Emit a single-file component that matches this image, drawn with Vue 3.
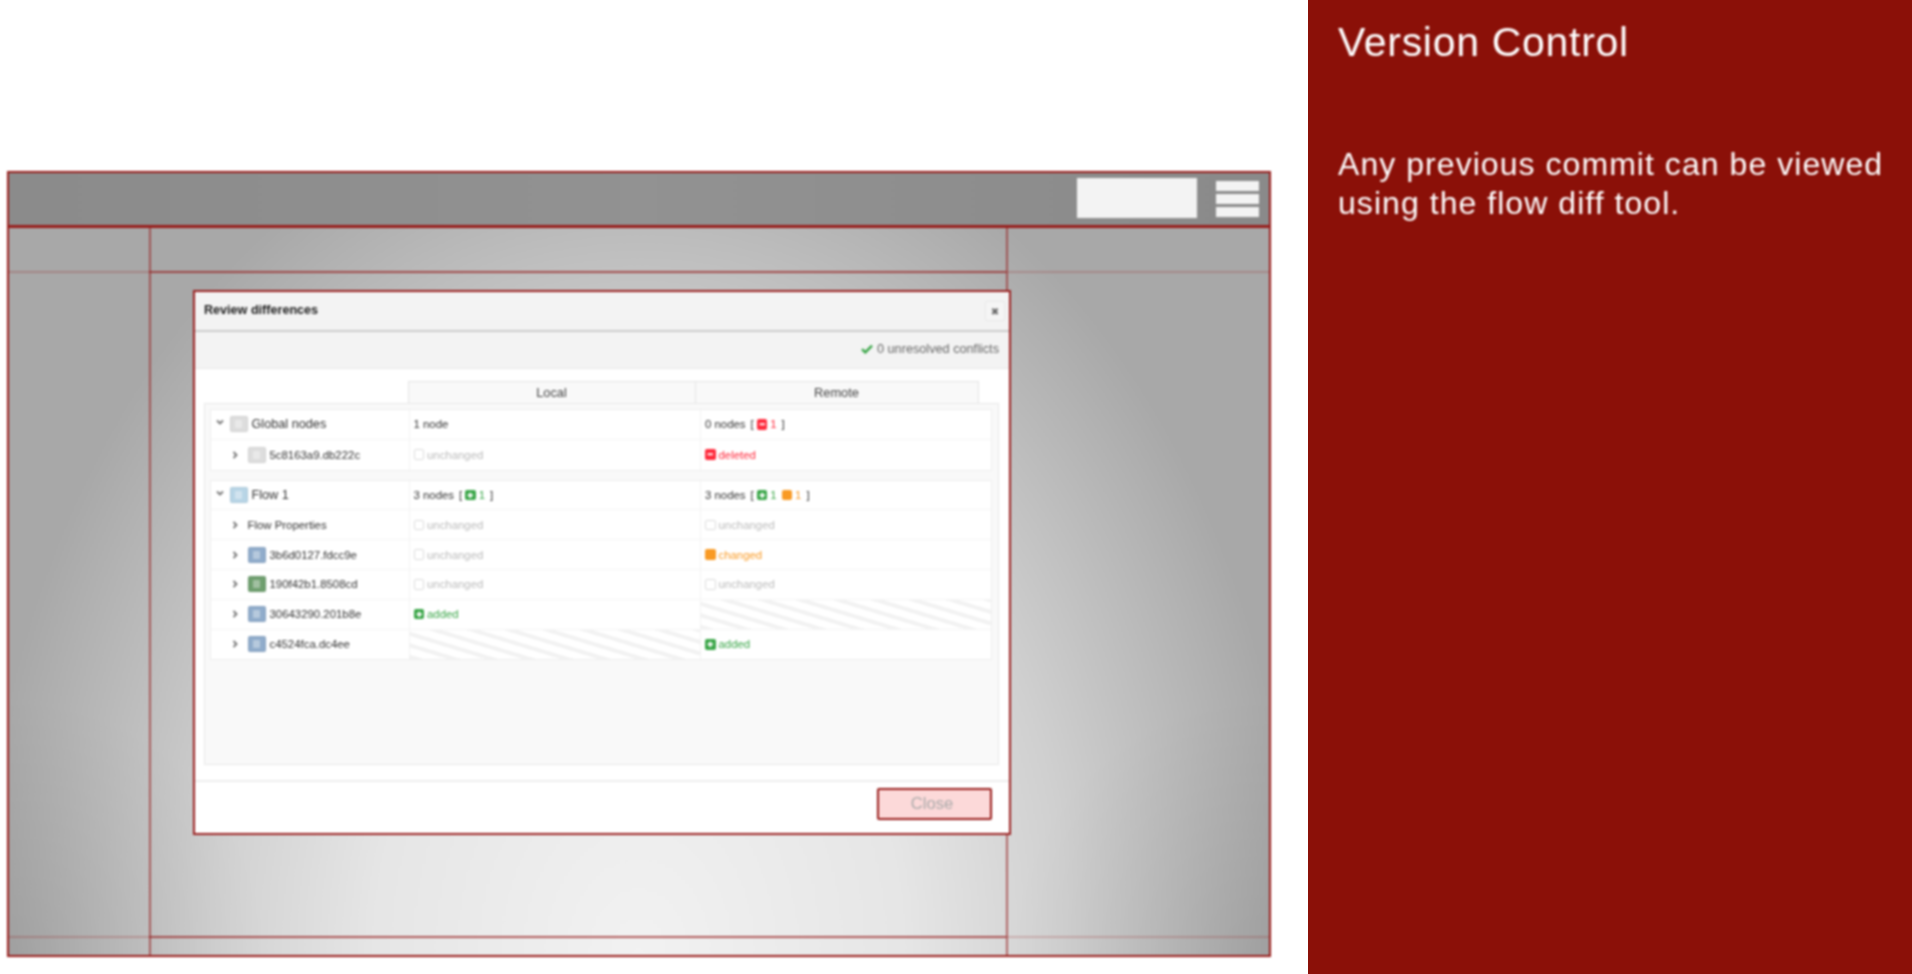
<template>
  <div class="page">
    <div class="stage">
      <div class="frame">
        <header class="topbar">
          <div class="search"></div>
          <div class="burger"><i></i><i></i><i></i></div>
        </header>
        <main class="workspace">
          <span class="guide v left"></span>
          <span class="guide v right"></span>
          <span class="guide h top"></span>
          <span class="guide h bottom"></span>

          <section class="dialog">
            <div class="dialog-title">
              <span>Review differences</span>
              <button class="close-x">✖</button>
            </div>
            <div class="dialog-toolbar">
              <svg class="tick" viewBox="0 0 12 10"><path d="M1 5.2 4.3 8.4 11 1.6" /></svg>
              <span>0 unresolved conflicts</span>
            </div>
            <div class="dialog-body">
              <div class="col-heads">
                <div class="col-head">Local</div>
                <div class="col-head">Remote</div>
              </div>
              <div class="list">
                <div v-for="group in groups" :key="group.name" class="group">
                  <div class="row">
                    <div class="name parent">
                      <svg class="chev" viewBox="0 0 8 8"><path d="M1 2.5 4 5.5 7 2.5" /></svg>
                      <span class="node" :class="group.icon"><b></b></span>
                      <span class="group-label">{{ group.name }}</span>
                    </div>
                    <div v-for="side in ['local', 'remote']" :key="side" class="cell">
                      <span>{{ group[side].text }}</span>
                      <span v-if="group[side].marks" class="bracket">[</span>
                      <span v-for="m in group[side].marks" :key="m" class="count" :class="m">
                        <span class="mark" :class="m">
                          <svg viewBox="0 0 12 12"><path v-if="m === 'added'" d="M6 3v6M3 6h6" /><path v-if="m === 'deleted'" d="M3 6h6" /></svg>
                        </span>1
                      </span>
                      <span v-if="group[side].marks">]</span>
                    </div>
                  </div>
                  <div v-for="row in group.rows" :key="row.name" class="row">
                    <div class="name child">
                      <svg class="chev" viewBox="0 0 8 8"><path d="M2.5 1 5.5 4 2.5 7" /></svg>
                      <span v-if="row.icon" class="node" :class="row.icon"><b></b></span>
                      <span class="child-label">{{ row.name }}</span>
                    </div>
                    <div v-for="side in ['local', 'remote']" :key="side" class="cell" :class="{ stripes: row[side] === 'none' }">
                      <span v-if="row[side] !== 'none'" class="status" :class="row[side]">
                        <span class="mark" :class="row[side]">
                          <svg viewBox="0 0 12 12"><path v-if="row[side] === 'added'" d="M6 3v6M3 6h6" /><path v-if="row[side] === 'deleted'" d="M3 6h6" /></svg>
                        </span>
                        {{ row[side] }}
                      </span>
                    </div>
                  </div>
                </div>
              </div>
            </div>
            <div class="dialog-footer">
              <button class="close-btn">Close</button>
            </div>
          </section>
        </main>
      </div>
    </div>

    <aside class="notes">
      <h1>Version Control</h1>
      <p>Any previous commit can be viewed using the flow diff tool.</p>
    </aside>
  </div>
</template>

<script setup>
const groups = [
  {
    name: 'Global nodes',
    icon: 'grey',
    local: { text: '1 node' },
    remote: { text: '0 nodes', marks: ['deleted'] },
    rows: [
      { name: '5c8163a9.db222c', icon: 'grey', local: 'unchanged', remote: 'deleted' }
    ]
  },
  {
    name: 'Flow 1',
    icon: 'sky',
    local: { text: '3 nodes', marks: ['added'] },
    remote: { text: '3 nodes', marks: ['added', 'changed'] },
    rows: [
      { name: 'Flow Properties', icon: null, local: 'unchanged', remote: 'unchanged' },
      { name: '3b6d0127.fdcc9e', icon: 'blue', local: 'unchanged', remote: 'changed' },
      { name: '190f42b1.8508cd', icon: 'green', local: 'unchanged', remote: 'unchanged' },
      { name: '30643290.201b8e', icon: 'blue', local: 'added', remote: 'none' },
      { name: 'c4524fca.dc4ee', icon: 'blue', local: 'none', remote: 'added' }
    ]
  }
]
</script>

<style>
html, body {
  margin: 0;
  background: #fff;
}
</style>

<style scoped>
.page {
  display: flex;
  width: 1912px;
  height: 974px;
  overflow: hidden;
  font-family: "Liberation Sans", Arial, sans-serif;
  background: #fff;
}

.stage {
  width: 1308px;
  flex: none;
  padding: 171px 0 0 7px;
  box-sizing: border-box;
  filter: blur(0.8px);
}

.frame {
  width: 1264px;
  height: 786px;
  box-sizing: border-box;
  border: 2px solid #981c1a;
  display: flex;
  flex-direction: column;
}

.topbar {
  height: 55px;
  flex: none;
  box-sizing: border-box;
  border-bottom: 3px solid #981c1a;
  background: linear-gradient(90deg, #8b8b8b, #929292 50%, #8a8a8a);
  display: flex;
  align-items: flex-start;
  justify-content: flex-end;
  padding: 5px 10px 0 0;
}

.search {
  width: 120px;
  height: 40px;
  background: #f3f3f3;
  margin-right: 19px;
}

.burger {
  width: 43px;
  display: flex;
  flex-direction: column;
  gap: 3.5px;
  padding-top: 3px;
}

.burger i {
  display: block;
  height: 9.5px;
  background: #f3f3f3;
}

.workspace {
  flex: 1;
  position: relative;
  background:
    radial-gradient(circle 260px at 0 100%, rgba(0, 0, 0, 0.08), transparent),
    radial-gradient(circle 260px at 100% 100%, rgba(0, 0, 0, 0.08), transparent),
    radial-gradient(ellipse 660px 880px at 50% 100%, #f2f2f2 0%, #e6e6e6 40%, #d0d0d0 65%, #b9b9b9 85%, #a8a8a8 100%);
  padding: 62px 0 0 184px;
}

.guide {
  position: absolute;
}
.guide.v {
  top: 0;
  bottom: 0;
  width: 2px;
  background: rgba(150, 30, 30, 0.6);
}
.guide.h {
  left: 0;
  right: 0;
  height: 2px;
  background: linear-gradient(90deg, rgba(150, 30, 30, 0.25) 0 140px, rgba(150, 30, 30, 0.7) 140px 997px, rgba(150, 30, 30, 0.22) 997px);
}
.guide.left { left: 140px; }
.guide.right { left: 997px; }
.guide.top { top: 43px; }
.guide.bottom { top: 708px; }

.dialog {
  position: relative;
  width: 818px;
  height: 545px;
  box-sizing: border-box;
  border: 2px solid #9a2020;
  background: #fff;
  display: flex;
  flex-direction: column;
}

.dialog-title {
  height: 38px;
  flex: none;
  box-sizing: content-box;
  background: #f3f3f3;
  border-bottom: 2px solid #ccc;
  display: flex;
  align-items: center;
  justify-content: space-between;
  padding: 0 4px 0 9px;
  font-size: 12.6px;
  font-weight: bold;
  color: #222;
}

.dialog-title span {
  margin-bottom: 2px;
}

.close-x {
  width: 20px;
  height: 20px;
  padding: 0;
  border: 1px solid #e8e8e8;
  border-radius: 2px;
  background: #f5f5f5;
  color: #666;
  font: 10px "DejaVu Sans", sans-serif;
}

.dialog-toolbar {
  height: 37px;
  flex: none;
  box-sizing: border-box;
  background: #f3f3f3;
  border-bottom: 1px solid #e8e8e8;
  display: flex;
  align-items: center;
  justify-content: flex-end;
  gap: 4px;
  padding: 0 10px 3px 0;
  font-size: 12.7px;
  color: #666;
}

.tick {
  width: 12px;
  height: 10px;
}
.tick path {
  fill: none;
  stroke: #3aa648;
  stroke-width: 2.4;
}

.dialog-body {
  flex: 1;
  padding: 12px 10px 0 8.5px;
}

.col-heads {
  display: flex;
  padding-left: 204px;
  height: 22px;
}

.col-head {
  width: 284px;
  box-sizing: border-box;
  background: #f9f9f9;
  border: 1px solid #e4e4e4;
  border-bottom: none;
  text-align: center;
  font-size: 12.8px;
  line-height: 21px;
  color: #444;
}
.col-head:first-child {
  width: 287px;
  border-right: none;
}

.list {
  height: 362px;
  box-sizing: border-box;
  background: #f9f9f9;
  border: 1px solid #e8e8e8;
  padding: 5px 6px 5px 5px;
}

.group {
  background: #fff;
  border: 1px solid #eee;
  margin-bottom: 9px;
}

.row {
  display: grid;
  grid-template-columns: 198px 291.5px 1fr;
  height: 29.8px;
  border-bottom: 1px solid #f5f5f5;
  box-sizing: border-box;
}
.row:last-child {
  border-bottom: none;
}

.name {
  display: flex;
  align-items: center;
  color: #333;
}
.name.parent { padding-left: 5px; gap: 4px; }
.name.parent .chev { margin: -4px 2px 0 0; }
.name.child { padding-left: 20px; gap: 4px; }
.name.child .chev { margin-right: 5px; }

.chev {
  width: 8px;
  height: 8px;
  flex: none;
}
.chev path {
  fill: none;
  stroke: #777;
  stroke-width: 1.8;
}

.node {
  width: 18px;
  height: 16px;
  flex: none;
  border-radius: 2px;
  display: flex;
  align-items: center;
  justify-content: center;
  border: 1px solid rgba(0, 0, 0, 0.06);
  box-sizing: border-box;
}
.node b {
  width: 7px;
  height: 8px;
  background: rgba(255, 255, 255, 0.35);
  border-radius: 1px;
}
.node.grey { background: #ddd; }
.node.sky { background: #b8d5e6; }
.node.blue { background: #90accb; }
.node.green { background: #6f9f6f; }

.group-label {
  font-size: 12.7px;
}
.child-label {
  font-size: 11.4px;
}

.cell {
  border-left: 1px solid #f2f2f2;
  padding-left: 4px;
  display: flex;
  align-items: center;
  font-size: 11.4px;
  color: #333;
}

.bracket {
  margin: 0 3px 0 5px;
}

.stripes {
  background: repeating-linear-gradient(17deg, #f2f2f2 0 4px, #fff 4px 11px);
}

.count {
  display: inline-flex;
  align-items: center;
  gap: 3px;
  margin-right: 5px;
}
.count.added { color: #3aa648; }
.count.deleted { color: #ff2a3c; }
.count.changed { color: #f99a24; }

.status {
  display: inline-flex;
  align-items: center;
  gap: 3px;
}
.status.unchanged { color: #bbb; }
.status.added { color: #3aa648; }
.status.deleted { color: #ff2a3c; }
.status.changed { color: #f99a24; }

.mark {
  width: 10.5px;
  height: 10.5px;
  border-radius: 2px;
  box-sizing: border-box;
  display: inline-block;
  flex: none;
}
.mark svg {
  display: block;
  width: 100%;
  height: 100%;
}
.mark path {
  stroke: #fff;
  stroke-width: 2.2;
  fill: none;
}
.mark.unchanged { border: 1px solid #dcdcdc; }
.mark.added { background: #3aa648; }
.mark.deleted { background: #ff2a3c; }
.mark.changed { background: #f99a24; }

.dialog-footer {
  height: 53px;
  flex: none;
  border-top: 2px solid #eee;
  box-sizing: border-box;
  display: flex;
  align-items: flex-start;
  justify-content: flex-end;
  padding: 6px 17px 0 0;
}

.close-btn {
  width: 115px;
  height: 32px;
  padding: 0 5px 0 0;
  border: 2px solid #981c1a;
  border-radius: 2px;
  background: #fcd9d9;
  color: #aaa;
  font: 16.6px "Liberation Sans", Arial, sans-serif;
}

.notes {
  flex: 1;
  background: #8b1008;
  color: #fff;
  padding: 21px 20px 0 30px;
}

.notes h1 {
  margin: 0;
  font-size: 41px;
  letter-spacing: 0.7px;
  font-weight: normal;
  line-height: 42px;
  filter: blur(0.8px);
}

.notes p {
  margin: 82px 0 0;
  font-size: 32px;
  letter-spacing: 1.05px;
  line-height: 39px;
  filter: blur(0.8px);
}
</style>
